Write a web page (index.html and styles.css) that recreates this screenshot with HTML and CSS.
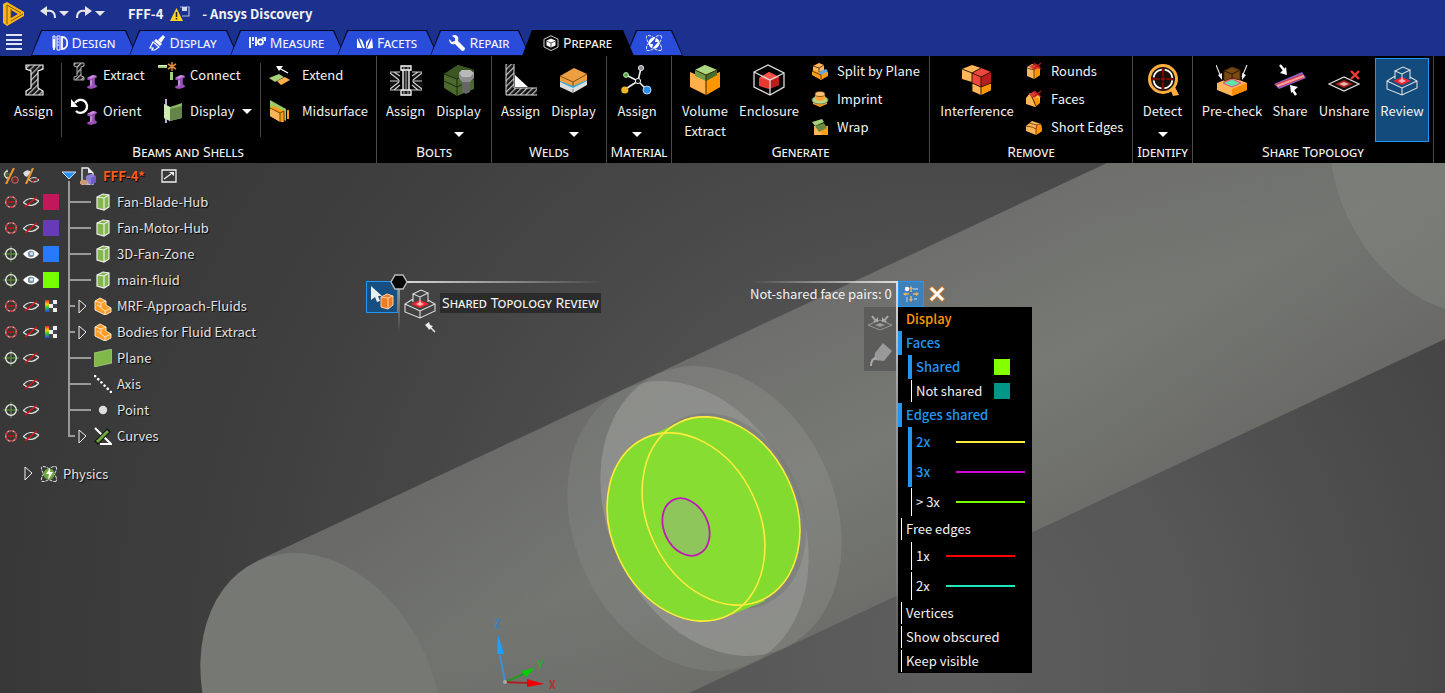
FILE: index.html
```html
<!DOCTYPE html>
<html lang="en">
<head>
<meta charset="utf-8">
<title>FFF-4 - Ansys Discovery</title>
<link rel="stylesheet" href="styles.css">
</head>
<body>
<svg class="defs" aria-hidden="true">
  <defs>
    <pattern id="hatch" width="4" height="4" patternUnits="userSpaceOnUse" patternTransform="rotate(-45)"><rect width="4" height="4" fill="#111"/><rect width="4" height="1.3" fill="#bbb"/></pattern>
    <linearGradient id="rainbow" x1="0" y1="0" x2="0" y2="1"><stop offset="0" stop-color="#e22"/><stop offset=".35" stop-color="#fc0"/><stop offset=".6" stop-color="#3c3"/><stop offset="1" stop-color="#24e"/></linearGradient>
  </defs>
  <symbol id="purple-beam" viewBox="0 0 12 16"><path d="M1 4 7 1l4 1v2L9 5v6l2 1v2l-6 2-4-1v-2l3-1V7L1 6z" fill="#9a4fb5"/><path d="M1 4 7 1l4 1-6 3zM4 7l2-1v6l-2 1z" fill="#c98bdd"/></symbol>
  <symbol id="i-beam" viewBox="0 0 32 32"><path d="M8 1h17v4l-5 2v17l5 3v4H8v-4l5-3V7L8 5z" fill="url(#hatch)" stroke="#eee" stroke-width="1.2"/></symbol>
  <symbol id="i-extract" viewBox="0 0 28 28"><path d="M3 2h10v3l-3 1v9l3 1v3H3v-3l3-1V6L3 5z" fill="url(#hatch)" stroke="#aaa"/><use href="#purple-beam" x="15" y="13" width="12" height="15"/></symbol>
  <symbol id="i-orient" viewBox="0 0 28 28"><path d="M4 6a6.500 6.500 0 1 1 1 8" fill="none" stroke="#fff" stroke-width="2.400"/><path d="M0 2v8h7z" fill="#fff"/><use href="#purple-beam" x="15" y="13" width="12" height="15"/></symbol>
  <symbol id="i-connect" viewBox="0 0 28 28"><path d="M0 4h9v3H0z" fill="#a5cf78"/><path d="M0 4h9v1H0z" fill="#e3f3cf"/><path d="M12 11h3v8h-3z" fill="#a5cf78"/><path d="M14 1v9M10 3l8 5M18 3l-8 5" stroke="#e08a3c" stroke-width="1.5"/><use href="#purple-beam" x="16" y="13" width="12" height="15"/></symbol>
  <symbol id="i-bdisplay" viewBox="0 0 28 28"><path d="M8 2v24" stroke="#c9a4dc" stroke-width="2"/><path d="M6 7l6 3 12-4v15l-12 3-6-3z" fill="#8cb86a"/><path d="M6 7l6 3v14l-6-3z" fill="#cdeab0"/><path d="M12 12l12-3v12l-12 3z" fill="#64854a"/></symbol>
  <symbol id="i-extend" viewBox="0 0 24 24"><path d="M1 15l10-4 5 3-9 5z" fill="#a5cf78"/><path d="M9 18l8-4 5 3-9 5z" fill="#ffb04a"/><path d="M20 10 11 5" stroke="#fff" stroke-width="1.4"/><path d="M8 3h7l-4 5z" fill="#fff"/></symbol>
  <symbol id="i-mid" viewBox="0 0 24 24"><path d="M2 1l16 9v12L2 12z" fill="#9ccb6a"/><path d="M2 9l4-2 10 5v11h-3L2 17z" fill="#ff9c1a"/><path d="M2 9l10 5v9L2 17z" fill="#ffb65a"/><path d="M2 9l10 5v9M12 14l4-2v10" fill="none" stroke="#7a4300"/><path d="M19 11h2v9h-2z" fill="#ff9c1a"/></symbol>
  <symbol id="i-bolt" viewBox="0 0 32 32"><path d="M0 8h9v18H0zM23 8h9v18h-9z" fill="#111"/><path d="M0 8h10M0 17h10M0 26h10M22 8h10M22 17h10M22 26h10M0 9l9 7M4 8l6 4M32 9l-9 7M28 8l-6 4M0 25l9-7M4 26l6-5M32 25l-9-7M28 26l-6-5" stroke="#ccc" stroke-width="1.2"/><path d="M11 2h10v4H11zM13 6h6v20h-6zM11 26h10v5H11z" fill="#222" stroke="#fff" stroke-width="1.3"/><path d="M14 2v4M18 2v4M14 26v5M18 26v5M16 7v18" stroke="#ccc" stroke-width=".8"/></symbol>
  <symbol id="i-boltd" viewBox="0 0 32 32"><path d="M1 10 15 1l16 5v19l-17 7L1 24z" fill="#4b6a2d"/><path d="M1 10 15 1l16 5-17 9z" fill="#3d5724"/><path d="M1 10l13 5v17M14 15l17-9M1 17l13 6 17-8" fill="none" stroke="#1b290e"/><path d="M19 16h8v12l-4 2-4-2z" fill="#666"/><path d="M16 9l3-3h8l4 3v5l-4 4h-8l-3-4z" fill="#8d8d8d"/><path d="M16 9l3-3h8l4 3-4 4h-8z" fill="#b9b9b9"/></symbol>
  <symbol id="i-weld" viewBox="0 0 32 32"><path d="M1 0h8v24h23v7H1z" fill="url(#hatch)"/><path d="M1 0v31h31M9 0v24h23" fill="none" stroke="#ddd"/><path d="M10 11v12h13z" fill="#fff"/></symbol>
  <symbol id="i-weldd" viewBox="0 0 32 32"><path d="M2 15l13-7 14 4v9l-14 8-13-6z" fill="#ddd"/><path d="M2 13v5l13 6 14-7v-5z" fill="#35a9d8"/><path d="M2 12 16 4l13 6v6l-14 6-13-5z" fill="#ee9f42"/><path d="M2 12l13 6 14-8M15 18v4" fill="none" stroke="#7b4c13"/><path d="M15 25v4" stroke="#777"/></symbol>
  <symbol id="i-mat" viewBox="0 0 32 32"><path d="M17 17 20 4M17 17 5 11M17 17 3 26M17 17l9 9" stroke="#eee" stroke-width="1.6"/><circle cx="20" cy="4" r="2.600" fill="#8a8f99" stroke="#ddd"/><circle cx="5" cy="11" r="2.400" fill="#4fa63c" stroke="#cfe8c7"/><circle cx="3.800" cy="26" r="3.600" fill="#f3b52d"/><circle cx="26" cy="26" r="4" fill="#2f8be6" stroke="#b5d9ff"/><circle cx="17" cy="17" r="2.600" fill="#111" stroke="#eee"/></symbol>
  <symbol id="i-vol" viewBox="0 0 32 32"><path d="M1 8l16 7 14-7v15l-14 8L1 23z" fill="#ffb04a"/><path d="M17 15l14-7v15l-14 8z" fill="#ff9500"/><path d="M6 6 16 1l12 5v5l-11 6L6 12z" fill="#6d9e45"/><path d="M6 6 16 1l12 5-11 5z" fill="#add681"/><path d="M17 11l11-5v5l-11 6z" fill="#466b2a"/><path d="M17 17v14M6 6l11 5 11-5M17 11v6" stroke="#3a2400" fill="none"/></symbol>
  <symbol id="i-encl" viewBox="0 0 32 32"><path d="M6 14l10-6 10 5v8l-10 4-10-3z" fill="#e5382f"/><path d="M16 17l10-4v8l-10 4z" fill="#b71f1c"/><path d="M6 14l10-6 10 5-10 4z" fill="#f4504a"/><path d="M1 8 15 1l16 8v14L17 31 1 23zM1 8l16 8 14-7M17 16v15" fill="none" stroke="#ddd" stroke-width="1.300"/></symbol>
  <symbol id="i-split" viewBox="0 0 18 18"><path d="M1 9l5-3 11 4v4l-7 4-9-5z" fill="#ff9c1a"/><path d="M2 4l6-3 5 2v5l-6 2-5-2z" fill="#ffb65a"/><path d="M8 10l7-3 2 2-7 4z" fill="#58a8ee"/><path d="M2 4l6 2 5-3M8 6v4M1 9l9 4M10 13v4" fill="none" stroke="#3c2500" stroke-width=".8"/></symbol>
  <symbol id="i-imprint" viewBox="0 0 18 18"><path d="M2 9h14v5l-7 3-7-3z" fill="#ff9c1a"/><ellipse cx="9" cy="10" rx="8" ry="4" fill="#b8d98f" stroke="#67844c"/><path d="M4 4v5c2 3 8 3 10 0V4z" fill="#ffa63a"/><ellipse cx="9" cy="4" rx="5" ry="2.500" fill="#ffc27a" stroke="#5c3700" stroke-width=".7"/></symbol>
  <symbol id="i-wrap" viewBox="0 0 18 18"><path d="M3 8h14v9H3z" fill="#ff9c1a"/><path d="M3 8l7 4v5H3z" fill="#ffb65a"/><path d="M1 4l10-3 2 3-9 4z" fill="#a6d274"/><path d="M4 8l9-3 3 5-8 4z" fill="#6a8a3e"/></symbol>
  <symbol id="i-interf" viewBox="0 0 32 32"><path d="M1 5l10-4 9 3-9 5v9L1 15z" fill="#ffb65a"/><path d="M11 20h19v6l-10 5-9-4z" fill="#ffb65a"/><path d="M20 20h10v6l-10 5z" fill="#ff9500"/><path d="M11 9l9-5 10 4v11l-10 4-9-4z" fill="#ee453c"/><path d="M20 13l10-5v11l-10 4z" fill="#b71f1c"/><path d="M1 5l10 4 9-5M11 9l9 4 10-5M20 13v18M11 9v18M11 19l9 4 10-4" fill="none" stroke="#331a00"/></symbol>
  <symbol id="i-rounds" viewBox="0 0 18 18"><path d="M2 5l5-3 8 3v8l-6 4-7-3z" fill="#ffb65a"/><path d="M9 8l6-3v8l-6 4z" fill="#ff9500"/><path d="M4 4l8-2 3 4-6 2z" fill="#d83a32"/><path d="M2 6l7 2v9" fill="none" stroke="#4b2c00" stroke-width=".8"/><path d="M9 1l7 6M16 1l-7 6" stroke="#c01818" stroke-width="1.3"/></symbol>
  <symbol id="i-faces" viewBox="0 0 18 18"><path d="M1 8l4-5 10 2v7l-5 5-9-3z" fill="#ffb65a"/><path d="M7 7l7 1 1 5-5 4z" fill="#ff9500"/><path d="M4 4l6-3 3 4-6 3z" fill="#d83a32"/><path d="M7 7l4 9" stroke="#4b2c00"/><path d="M9 1l7 6M16 1l-7 6" stroke="#c01818" stroke-width="1.3"/></symbol>
  <symbol id="i-short" viewBox="0 0 18 18"><path d="M1 8l6-5 9 3 1 7-6 4-10-4z" fill="#ffb65a"/><path d="M11 10l5-4 1 7-6 4z" fill="#ff9500"/><path d="M1 8l6 1 4 2v6M4 5l8 2-1 4M12 7l4-1" fill="none" stroke="#5b3600" stroke-width=".8"/><path d="M12 7l-1 4" stroke="#d22"/></symbol>
  <symbol id="i-detect" viewBox="0 0 32 32"><circle cx="16" cy="15" r="13.500" fill="#15100c" stroke="#ffae3d" stroke-width="3"/><path d="M24 27l4-4 4 8-6 1z" fill="#ffae3d"/><circle cx="16" cy="15" r="9.500" fill="none" stroke="#fff" stroke-width="1.800" stroke-dasharray="11.900 3" stroke-dashoffset="-1.500"/><path d="M5 15h8M19 15h8M16 4v8M16 18v8M14 15h4M16 13v4" stroke="#c00" stroke-width="1.2"/></symbol>
  <symbol id="i-pre" viewBox="0 0 32 32"><path d="M1 19l15-6 15 6v7l-15 6-15-6z" fill="#ffb65a"/><path d="M16 25l15-6v7l-15 6z" fill="#ff8c00"/><path d="M7 19l9-4 9 4-9 4z" fill="#5fe3a8" stroke="#e9418d"/><path d="M8 7l8-4 8 3v10l-8-2-8 3z" fill="#7a4a12" stroke="#4b2b05"/><path d="M8 7l8 3 8-4M16 10v5" fill="none" stroke="#2c1903"/><path d="M0 1l5 12M31 1l-5 12" stroke="#ddd" stroke-width="1.2"/><path d="M2 11l4 5V9zM30 11l-4 5V9z" fill="#eee"/></symbol>
  <symbol id="i-share" viewBox="0 0 32 32"><path d="M0 20 28 8l4 6L5 25z" fill="#8c62c9"/><path d="M2 20 29 10l1 4L5 23z" fill="#e53935"/><path d="M3 22 30 12" stroke="#f6a0a0" stroke-width="2"/><path d="M6 1l4 5M22 31l-4-6" stroke="#fff" stroke-width="2.400"/><path d="M13 11 6 9l6-6zM16 21l8 2-7 6z" fill="#fff"/></symbol>
  <symbol id="i-unshare" viewBox="0 0 32 32"><path d="M1 20l15-7 15 7-15 7z" fill="#140808" stroke="#ddd" stroke-width="1.2"/><path d="M7 20l9-4 9 4-9 4z" fill="#9d2420"/><path d="M11 20l5-2 5 2-5 2z" fill="#f3b3ae"/><path d="M23 7l8 8M31 7l-8 8" stroke="#f23c32" stroke-width="2.400"/></symbol>
  <symbol id="i-review" viewBox="0 0 32 32"><path d="M7 17l9-4 9 4-9 4z" fill="#ee2430"/><path d="M12 17l4-2 4 2-4 2z" fill="#ffb0b0"/><path d="M9 7l8-4 7 3-8 4zM9 7v8M16 10v6M24 6v9M9 12 1 17v8l15 6 15-7v-7l-7-4M1 17l15 7 15-7M16 24v7" fill="none" stroke="#ddd" stroke-width="1.1"/></symbol>

  <symbol id="t-design" viewBox="0 0 16 16"><path d="M1 1h2v11l-1 3-1-3zM5 1h3v14H5z" fill="none" stroke="#fff"/><path d="M1 4h2v8l-1 3-1-3z" fill="#fff"/><path d="M5 4h2M5 7h2M5 10h2" stroke="#fff"/><path d="M10 2c7 0 7 12 0 12z" fill="none" stroke="#fff" stroke-width="1.8"/></symbol>
  <symbol id="t-display" viewBox="0 0 16 16"><path d="M14 0l2 2-4 6-3-3z" fill="#fff"/><path d="M7 4l6 5-2 2-6-5z" fill="#fff"/><path d="M4 7l6 5-4 3H3l1-2H1z" fill="none" stroke="#fff" stroke-width="1.2"/></symbol>
  <symbol id="t-measure" viewBox="0 0 18 16"><path d="M1 2v11M4 2v4M4 8v1M7 2v9M16 2v4" stroke="#fff" stroke-width="1.800"/><circle cx="11.500" cy="7" r="2.500" fill="none" stroke="#fff" stroke-width="1.800"/><path d="M13 3h2" stroke="#fff" stroke-width="1.400"/></symbol>
  <symbol id="t-facets" viewBox="0 0 16 16"><path d="M0 3v10h5zM2 3l3 2 3 8H6zM9 14V7l4-4zM15 3l1 10-6 1z" fill="#fff"/></symbol>
  <symbol id="t-repair" viewBox="0 0 16 16"><path d="M5 0c4 0 5 3 4 6l7 7c0 2-1 3-3 3L6 9C3 10 0 8 0 4l3 3 3-1V3L3 1z" fill="#fff"/></symbol>
  <symbol id="t-prepare" viewBox="0 0 16 16"><path d="M8 .7l7 3.500v8L8 15.500 1 12V4.200z" fill="none" stroke="#ccc" stroke-width="1"/><path d="M8 3.500l4.500 2v5L8 12.500l-4.500-2v-5z" fill="#fff"/><path d="M3.500 6 8 8l4.500-2M8 8v4" stroke="#333" stroke-width=".8" fill="none"/></symbol>
  <symbol id="atom" viewBox="0 0 18 18"><ellipse cx="9" cy="9" rx="10" ry="4" transform="rotate(45 9 9)" fill="none" stroke="#ddd" stroke-dasharray="3 1"/><ellipse cx="9" cy="9" rx="10" ry="4" transform="rotate(-45 9 9)" fill="none" stroke="#ddd" stroke-dasharray="3 1"/><circle cx="9" cy="9" r="5.500" fill="currentColor"/></symbol>

  <symbol id="s-off" viewBox="0 0 16 16"><circle cx="8" cy="8" r="5.300" fill="none" stroke="#d9c4c4" stroke-width="1.300"/><circle cx="8" cy="8" r="5.300" fill="none" stroke="#c22" stroke-width="1.300" stroke-dasharray="4 1.550"/><path d="M5 8h6" stroke="#c11" stroke-width="1.6"/></symbol>
  <symbol id="s-on" viewBox="0 0 16 16"><path d="M0 8h16M8 0v16" stroke="#55803a" stroke-width="1.6"/><circle cx="8" cy="8" r="5.300" fill="none" stroke="#eee" stroke-width="1.300"/></symbol>
  <symbol id="e-off" viewBox="0 0 16 16"><path d="M0 9c4-5 10-6 16-2-4 5-10 6-15 2" fill="none" stroke="#ddd" stroke-width="1.3"/><path d="M2 13 14 3" stroke="#d11" stroke-width="1.6"/></symbol>
  <symbol id="e-on" viewBox="0 0 16 16"><path d="M0 8c5-6 11-6 16 0-5 6-11 6-16 0z" fill="#fff"/><circle cx="8" cy="8" r="3.200" fill="#7d93a5"/><circle cx="8.500" cy="7.500" r="1.600" fill="#d4ecfa"/></symbol>
  <symbol id="c-multi" viewBox="0 0 16 16"><path d="M2 2h4v12H2z" fill="url(#rainbow)"/><path d="M10 2h4v4h-4zM6 6h4v4H6zM10 10h4v4h-4z" fill="#eee"/><path d="M6 2h4v4H6zM10 6h4v4h-4zM6 10h4v4H6z" fill="#444"/></symbol>
  <symbol id="n-body" viewBox="0 0 16 18"><path d="M2 4l6-3 6 1v12l-5 3-7-2z" fill="#82b74a" stroke="#eee" stroke-width="1.2"/><path d="M2 4l7 1 5-3M9 5v12" stroke="#eee" stroke-width="1.2" fill="none"/></symbol>
  <symbol id="n-comp" viewBox="0 0 18 18"><path d="M1 4l5-3 6 3v4l5 3v4l-6 3-10-5z" fill="#ff9c26" stroke="#f6e3c8"/><path d="M1 4l6 2 5-2M7 6v5l4 3 6-3M11 14v4M3 8l4 2" stroke="#f6e3c8" fill="none"/></symbol>
  <symbol id="n-plane" viewBox="0 0 18 18"><path d="M0 4l18-4v14L0 18z" fill="#82b74a" stroke="#a6c986" stroke-width=".8"/></symbol>
  <symbol id="n-axis" viewBox="0 0 18 18"><path d="M1 1l16 16" stroke="#fff" stroke-width="2.600" stroke-linecap="round" stroke-dasharray=".1 4.400"/></symbol>
  <symbol id="n-point" viewBox="0 0 18 18"><circle cx="9" cy="9" r="4.200" fill="#ddd"/></symbol>
  <symbol id="n-curves" viewBox="0 0 18 18"><path d="M1 1l16 16H6" fill="none" stroke="#fff" stroke-width="2"/><path d="M2 16 15 3" stroke="#111" stroke-width="5"/><path d="M3 15 14 4" stroke="#6fa83c" stroke-width="3"/></symbol>
</svg>

<header class="titlebar">
  <svg class="logo" viewBox="0 0 24 26"><path d="M1 3l4-2 17 10v4L5 25l-4-3z" fill="#fdb515"/><path d="M9 9l7 4-7 4z" fill="#1c318d"/><path d="M5 4v19M9 17V8M5 4l14 8M9 20l12-7" fill="none" stroke="#7b5614" stroke-width="1"/></svg>
  <button class="quick undo" aria-label="Undo"><svg viewBox="0 0 30 16" width="30" height="16"><path d="M6 5c6-1 9 1 9 7" fill="none" stroke="#e6e6e6" stroke-width="2"/><path d="M0 5l7-5v10z" fill="#e6e6e6"/><path d="M19 5h10l-5 5z" fill="#e6e6e6"/></svg></button>
  <button class="quick redo" aria-label="Redo"><svg viewBox="0 0 30 16" width="30" height="16"><path d="M10 5C4 4 1 6 1 12" fill="none" stroke="#e6e6e6" stroke-width="2"/><path d="M16 5 9 0v10z" fill="#e6e6e6"/><path d="M19 5h10l-5 5z" fill="#e6e6e6"/></svg></button>
  <strong class="doc">FFF-4</strong>
  <svg class="warn" viewBox="0 0 20 16"><path d="M10 1h9v9h-7" fill="none" stroke="#a9b3d9" stroke-width="1.200"/><path d="M12 1h5v4h-5z" fill="#cfd5ec"/><path d="M6.500 2 13 15H0z" fill="#ffd21c"/><path d="M6.500 6v5M6.500 12v1.500" stroke="#222" stroke-width="1.5"/></svg>
  <strong>- Ansys Discovery</strong>
</header>

<nav class="tabs">
  <button class="menu" aria-label="Menu"><svg viewBox="0 0 16 16" width="16" height="16"><path d="M0 1h16M0 6h16M0 10h16M0 15h16" stroke="#dfe3f5" stroke-width="2"/></svg></button>
  <button class="tab w-design"><svg><use href="#t-design"/></svg><span>Design</span></button>
  <button class="tab w-display"><svg><use href="#t-display"/></svg><span>Display</span></button>
  <button class="tab w-measure"><svg><use href="#t-measure"/></svg><span>Measure</span></button>
  <button class="tab w-facets"><svg><use href="#t-facets"/></svg><span>Facets</span></button>
  <button class="tab w-repair"><svg><use href="#t-repair"/></svg><span>Repair</span></button>
  <button class="tab w-prepare active"><svg><use href="#t-prepare"/></svg><span>Prepare</span></button>
  <button class="tab w-physics" aria-label="Physics"><svg class="white"><use href="#atom"/><path d="M11 3 5 10h3l-1 5 6-7h-3z" fill="#2a4cdb"/></svg></button>
</nav>

<section class="ribbon">
  <div class="group">
    <div class="tools">
      <button class="big b-first"><svg><use href="#i-beam"/></svg>Assign</button>
      <div class="small two ruled">
        <button><svg><use href="#i-extract"/></svg>Extract</button>
        <button><svg><use href="#i-connect"/></svg>Connect</button>
        <button><svg><use href="#i-orient"/></svg>Orient</button>
        <button><svg><use href="#i-bdisplay"/></svg>Display<i class="caret"></i></button>
      </div>
      <div class="small one ruled">
        <button><svg><use href="#i-extend"/></svg>Extend</button>
        <button><svg><use href="#i-mid"/></svg>Midsurface</button>
      </div>
    </div>
    <h2>Beams and Shells</h2>
  </div>
  <div class="group">
    <div class="tools center">
      <button class="big"><svg><use href="#i-bolt"/></svg>Assign</button>
      <button class="big"><svg><use href="#i-boltd"/></svg>Display<i class="caret"></i></button>
    </div>
    <h2>Bolts</h2>
  </div>
  <div class="group">
    <div class="tools center">
      <button class="big"><svg><use href="#i-weld"/></svg>Assign</button>
      <button class="big"><svg><use href="#i-weldd"/></svg>Display<i class="caret"></i></button>
    </div>
    <h2>Welds</h2>
  </div>
  <div class="group">
    <div class="tools center">
      <button class="big"><svg><use href="#i-mat"/></svg>Assign<i class="caret"></i></button>
    </div>
    <h2>Material</h2>
  </div>
  <div class="group">
    <div class="tools pad">
      <button class="big w58"><svg><use href="#i-vol"/></svg>Volume<br>Extract</button>
      <button class="big w70"><svg><use href="#i-encl"/></svg>Enclosure</button>
      <div class="small three">
        <button><svg><use href="#i-split"/></svg>Split by Plane</button>
        <button><svg><use href="#i-imprint"/></svg>Imprint</button>
        <button><svg><use href="#i-wrap"/></svg>Wrap</button>
      </div>
    </div>
    <h2>Generate</h2>
  </div>
  <div class="group">
    <div class="tools pad">
      <button class="big w86"><svg><use href="#i-interf"/></svg>Interference</button>
      <div class="small three">
        <button><svg><use href="#i-rounds"/></svg>Rounds</button>
        <button><svg><use href="#i-faces"/></svg>Faces</button>
        <button><svg><use href="#i-short"/></svg>Short Edges</button>
      </div>
    </div>
    <h2>Remove</h2>
  </div>
  <div class="group">
    <div class="tools middle">
      <button class="big"><svg><use href="#i-detect"/></svg>Detect<i class="caret"></i></button>
    </div>
    <h2>Identify</h2>
  </div>
  <div class="group">
    <div class="tools pad">
      <button class="big w70"><svg><use href="#i-pre"/></svg>Pre-check</button>
      <button class="big w46"><svg><use href="#i-share"/></svg>Share</button>
      <button class="big w62"><svg><use href="#i-unshare"/></svg>Unshare</button>
      <button class="big w54 selected"><svg><use href="#i-review"/></svg>Review</button>
    </div>
    <h2>Share Topology</h2>
  </div>
</section>

<main class="view">
  <svg class="scene" viewBox="0 163 1445 530" preserveAspectRatio="xMinYMin slice" role="img" aria-label="Model view">
    <defs>
      <radialGradient id="bg" cx="950" cy="650" r="950" gradientUnits="userSpaceOnUse"><stop offset="0" stop-color="#5e5e5e"/><stop offset=".25" stop-color="#575757"/><stop offset=".5" stop-color="#4a4a4a"/><stop offset=".75" stop-color="#3f3f3f"/><stop offset="1" stop-color="#383838"/></radialGradient>
      <linearGradient id="tube" x1="660" y1="370" x2="800" y2="660" gradientUnits="userSpaceOnUse"><stop offset="0" stop-color="#6e6f6c"/><stop offset=".5" stop-color="#777974"/><stop offset="1" stop-color="#6c6d69"/></linearGradient>
      <linearGradient id="shade" x1="250" y1="0" x2="1445" y2="0" gradientUnits="userSpaceOnUse"><stop offset="0" stop-color="#555" stop-opacity=".25"/><stop offset=".4" stop-color="#555" stop-opacity="0"/><stop offset=".7" stop-color="#555" stop-opacity="0"/><stop offset="1" stop-color="#555" stop-opacity=".15"/></linearGradient>
      <clipPath id="front-ring"><ellipse cx="688" cy="526" rx="151" ry="113" transform="rotate(65 688 526)"/></clipPath>
    </defs>
    <rect y="163" width="1445" height="530" fill="url(#bg)"/>
    <path d="M257 561 1107 163H1445V339L689 693 321 700Z" fill="url(#tube)"/>
    <path d="M257 561 1107 163H1445V339L689 693 321 700Z" fill="url(#shade)"/>
    <ellipse cx="321" cy="698" rx="151" ry="113" transform="rotate(65 321 698)" fill="#767873"/>
    <ellipse cx="1450" cy="169" rx="151" ry="113" transform="rotate(65 1450 169)" fill="#8c8e89" fill-opacity=".35"/>
    <ellipse cx="688" cy="526" rx="151" ry="113" transform="rotate(65 688 526)" fill="#a4a69f" fill-opacity=".16"/>
    <ellipse cx="721" cy="511" rx="151" ry="113" transform="rotate(65 721 511)" fill="#a8aaa4" fill-opacity=".22"/>
    <g clip-path="url(#front-ring)"><ellipse cx="721" cy="511" rx="151" ry="113" transform="rotate(65 721 511)" fill="#b0b2ac" fill-opacity=".26"/></g>
    <ellipse cx="724" cy="511" rx="102" ry="77" transform="rotate(65 724 511)" fill="#777974" fill-opacity=".6"/>
    <g fill="#80d92d">
      <ellipse cx="686" cy="527" rx="98" ry="74" transform="rotate(65 686 527)"/>
      <path d="M642 440 675 424 765 601 731 615Z"/>
    </g>
    <ellipse cx="721" cy="511" rx="98" ry="74" transform="rotate(65 721 511)" fill="#84db30"/>
    <ellipse cx="686" cy="527" rx="98" ry="74" transform="rotate(65 686 527)" fill="#8ae034" fill-opacity=".5"/>
    <g fill="none" stroke="#ffeb3b" stroke-width="1.6">
      <ellipse cx="721" cy="511" rx="98" ry="74" transform="rotate(65 721 511)"/>
      <ellipse cx="686" cy="527" rx="98" ry="74" transform="rotate(65 686 527)"/>
    </g>
    <ellipse cx="686" cy="527" rx="30" ry="22" transform="rotate(65 686 527)" fill="#8fc65c" stroke="#c218b8" stroke-width="1.8"/>
    <g stroke-width="2">
      <path d="M505 682 500 655" stroke="#3d8fd6"/><path d="M498 635 504 654H497Z" fill="#1ea0ff"/>
      <path d="M505 682 524 674" stroke="#1e9a1e"/><path d="M535 668 526 677 521 671Z" fill="#0c0"/>
      <path d="M505 682 528 683" stroke="#a22"/><path d="M544 684 527 687V679Z" fill="#e00"/>
      <circle cx="505" cy="682" r="2" fill="#aaa"/>
    </g>
    <g class="axis-label"><text x="494" y="628" fill="#3a7fc4">Z</text><text x="537" y="669" fill="#2ea82e">Y</text><text x="549" y="689" fill="#b92b2b">X</text></g>
  </svg>

  <section class="tree" aria-label="Model tree">
    <div class="row root"><svg class="c"><path d="M0 6h9M4 1v11" stroke="#55803a"/><path d="M5 3a3 3 0 1 0 0 7" fill="none" stroke="#ddd" stroke-width="1.300"/><circle cx="12" cy="12" r="3.300" fill="none" stroke="#d66"/><path d="M10 12h4" stroke="#c11"/><path d="M3 16 11 0" stroke="#f0962e" stroke-width="2"/></svg><svg class="c"><path d="M0 5q4-5 8-1L4 9Q1 8 0 5" fill="#ddd"/><path d="M6 12q5-5 10 0-5 4-10 0" fill="none" stroke="#ddd"/><path d="M8 15l7-5" stroke="#d11"/><path d="M3 16 10 0" stroke="#f0962e" stroke-width="2"/></svg><i class="c"></i><svg class="link"><path d="M8 18V26"/><path class="open" d="M1 9h14l-7 7z"/></svg><svg class="rooticon" viewBox="0 0 18 18"><path d="M3 1h6l5 5v11H3z" fill="#444" stroke="#eee" stroke-width="1.3"/><path d="M9 1v5h5" fill="#eee"/><path d="M7 9l5-2 5 2v6l-5 3-5-3z" fill="#8d7bd8"/><path d="M12 11l5-2v6l-5 3z" fill="#6f5cc4"/><path d="M1 14q5-3 9 1l-3 3-6-1z" fill="#c99a76"/></svg><strong>FFF-4*</strong><svg class="pop" viewBox="0 0 16 14"><path d="M1 1h14v12H1zM3 10l7-5" fill="none" stroke="#eee" stroke-width="1.3"/><path d="M13 3v4L8 3z" fill="#eee"/></svg></div>
    <div class="row"><svg class="c"><use href="#s-off"/></svg><svg class="c"><use href="#e-off"/></svg><i class="c crimson"></i><svg class="link"><path d="M8 0V26M8 13H30"/></svg><svg class="n"><use href="#n-body"/></svg><span>Fan-Blade-Hub</span></div>
    <div class="row"><svg class="c"><use href="#s-off"/></svg><svg class="c"><use href="#e-off"/></svg><i class="c violet"></i><svg class="link"><path d="M8 0V26M8 13H30"/></svg><svg class="n"><use href="#n-body"/></svg><span>Fan-Motor-Hub</span></div>
    <div class="row"><svg class="c"><use href="#s-on"/></svg><svg class="c"><use href="#e-on"/></svg><i class="c azure"></i><svg class="link"><path d="M8 0V26M8 13H30"/></svg><svg class="n"><use href="#n-body"/></svg><span>3D-Fan-Zone</span></div>
    <div class="row"><svg class="c"><use href="#s-on"/></svg><svg class="c"><use href="#e-on"/></svg><i class="c lime"></i><svg class="link"><path d="M8 0V26M8 13H30"/></svg><svg class="n"><use href="#n-body"/></svg><span>main-fluid</span></div>
    <div class="row"><svg class="c"><use href="#s-off"/></svg><svg class="c"><use href="#e-off"/></svg><svg class="c"><use href="#c-multi"/></svg><svg class="link"><path d="M8 0V26M8 13H14"/><path class="tri" d="M18 7v13l7-7z"/></svg><svg class="n"><use href="#n-comp"/></svg><span>MRF-Approach-Fluids</span></div>
    <div class="row"><svg class="c"><use href="#s-off"/></svg><svg class="c"><use href="#e-off"/></svg><svg class="c"><use href="#c-multi"/></svg><svg class="link"><path d="M8 0V26M8 13H14"/><path class="tri" d="M18 7v13l7-7z"/></svg><svg class="n"><use href="#n-comp"/></svg><span>Bodies for Fluid Extract</span></div>
    <div class="row"><svg class="c"><use href="#s-on"/></svg><svg class="c"><use href="#e-off"/></svg><i class="c"></i><svg class="link"><path d="M8 0V26M8 13H30"/></svg><svg class="n"><use href="#n-plane"/></svg><span>Plane</span></div>
    <div class="row"><i class="c"></i><svg class="c"><use href="#e-off"/></svg><i class="c"></i><svg class="link"><path d="M8 0V26M8 13H30"/></svg><svg class="n"><use href="#n-axis"/></svg><span>Axis</span></div>
    <div class="row"><svg class="c"><use href="#s-on"/></svg><svg class="c"><use href="#e-off"/></svg><i class="c"></i><svg class="link"><path d="M8 0V26M8 13H30"/></svg><svg class="n"><use href="#n-point"/></svg><span>Point</span></div>
    <div class="row"><svg class="c"><use href="#s-off"/></svg><svg class="c"><use href="#e-off"/></svg><i class="c"></i><svg class="link"><path d="M8 0V13H14"/><path class="tri" d="M18 7v13l7-7z"/></svg><svg class="n"><use href="#n-curves"/></svg><span>Curves</span></div>
    <div class="row physics"><svg class="tri-only"><path class="tri" d="M1 1v13l7-7z"/></svg><svg class="n leaf"><use href="#atom"/><path d="M10 3 6 9h3l-1 6 5-8h-3z" fill="#fff"/></svg><span>Physics</span></div>
  </section>

  <section class="guide">
    <i class="guide-h"></i><i class="guide-v"></i>
    <button class="pick" aria-label="Select bodies"><svg viewBox="0 0 30 30"><path d="M4 4v14l4-3 2 5 3-1-2-5h4z" fill="#eee"/><path d="M14 15l6-3 6 2v9l-5 4-7-2z" fill="#f47a20"/><path d="M14 15l7 1 5-2M21 16v11M14 15l6-3 6 2v9l-5 4-7-2z" fill="none" stroke="#f8d3b3"/></svg></button>
    <svg class="hex" viewBox="0 0 18 16"><path d="M5 1h8l4 7-4 7H5L1 8z" fill="#080808" stroke="#bbb" stroke-width="1.4"/></svg>
    <svg class="tool"><use href="#i-review"/></svg>
    <h1>Shared Topology Review</h1>
    <svg class="pin" viewBox="0 0 12 12"><path d="M1 4l4-3 1 3 3 1-4 4-1-2z" fill="#eee"/><path d="M6 6l5 5" stroke="#eee" stroke-width="1.4"/></svg>
  </section>

  <section class="review">
    <p class="pairs">Not-shared face pairs: 0</p>
    <div class="side">
      <svg viewBox="0 0 32 32"><path d="M4 18l12-5 12 5-12 5z" fill="none" stroke="#999"/><path d="M11 18l5-2 5 2-5 2z" fill="#999"/><path d="M8 9l4 5M24 9l-4 5" stroke="#aaa" stroke-width="2"/><path d="M9 15h5v-5zM23 15h-5v-5z" fill="#aaa"/></svg>
      <svg viewBox="0 0 32 32"><path d="M19 4l9 8-8 10-10-1 1-7z" fill="#999"/><path d="M13 19q-6 0-6 8" fill="none" stroke="#aaa" stroke-width="2"/></svg>
    </div>
    <button class="opts" aria-label="Display options"><svg viewBox="0 0 24 24"><path d="M12 5v14M5 12h14" stroke="#f0b05a" stroke-width="1.5" stroke-dasharray="5 4"/><path d="M12 4l-2 3h4zM12 20l-2-3h4zM4 12l3-2v4zM20 12l-3-2v4z" fill="#f0b05a"/><circle cx="8" cy="7" r="2.200" fill="#fff"/><path d="M14 7h5M8 15v5M15 17h3" stroke="#9cc4e6" stroke-width="1.300"/></svg></button>
    <button class="close" aria-label="Close"><svg viewBox="0 0 16 16"><path d="M3 3l10 10M13 3 3 13" stroke="#c9772b" stroke-width="5" stroke-linecap="square"/><path d="M3 3l10 10M13 3 3 13" stroke="#fff" stroke-width="3" stroke-linecap="square"/></svg></button>
    <div class="panel">
      <h2>Display</h2>
      <button class="on">Faces</button>
      <button class="sub on">Shared<i class="chip shared"></i></button>
      <button class="sub">Not shared<i class="chip teal"></i></button>
      <button class="on">Edges shared</button>
      <button class="sub tall on">2x<i class="line yellow"></i></button>
      <button class="sub tall on">3x<i class="line magenta"></i></button>
      <button class="sub tall">&gt; 3x<i class="line lime"></i></button>
      <button>Free edges</button>
      <button class="sub tall">1x<i class="line free red"></i></button>
      <button class="sub tall">2x<i class="line free mint"></i></button>
      <button>Vertices</button>
      <button>Show obscured</button>
      <button>Keep visible</button>
    </div>
  </section>
</main>
</body>
</html>
```
FILE: styles.css
```css
* { box-sizing: border-box; }
html, body { height: 100%; }
body {
  margin: 0;
  display: flex;
  flex-direction: column;
  background: #3c3c3c;
  color: #f2f2f2;
  font: 13px/20px "Noto Sans CJK SC", "Noto Sans", sans-serif;
  overflow: hidden;
}
button {
  border: 0;
  padding: 0;
  margin: 0;
  background: none;
  color: inherit;
  font: inherit;
  white-space: nowrap;
}
h1, h2, p { margin: 0; font-size: 13px; font-weight: 400; }
i { font-style: normal; }
svg { flex: none; display: block; }
.defs { position: absolute; width: 0; height: 0; }

.titlebar {
  display: flex;
  align-items: center;
  height: 28px;
  padding-left: 2px;
  background: #1c318d;
}
.logo { width: 24px; height: 26px; }
.quick { margin-left: 14px; height: 16px; }
.redo { margin-left: 6px; }
.doc { margin-left: 22px; }
.warn { width: 20px; height: 16px; margin: 0 12px 0 7px; }

.tabs {
  display: flex;
  height: 28px;
  background: #1c318d;
}
.menu { width: 31px; padding: 0 0 0 6px; }
.tab {
  position: relative;
  display: flex;
  align-items: center;
  justify-content: center;
  gap: 3px;
  margin: 2px -8px 0 0;
  padding-right: 2px;
  background: #05081c;
  clip-path: polygon(10px 0, calc(100% - 11px) 0, 100% 100%, 0 100%);
  font: 14px/20px "Noto Sans", sans-serif;
  font-variant: small-caps;
  isolation: isolate;
}
.tab::before {
  content: "";
  position: absolute;
  inset: 1px;
  z-index: -1;
  background: #2a4cdb;
  clip-path: polygon(10px 0, calc(100% - 11px) 0, 100% 100%, 0 100%);
}
.tab svg { width: 18px; height: 16px; }
.tab.active { background: #000; z-index: 1; }
.tab.active::before { display: none; }
.w-design { width: 106px; }
.w-display { width: 109px; }
.w-measure { width: 115px; }
.w-facets { width: 101px; }
.w-repair { width: 100px; }
.w-prepare { width: 112px; }
.w-physics { width: 57px; }
.tab .white { width: 18px; height: 18px; color: #fff; }

.ribbon {
  display: grid;
  grid-template-columns: 377px 115px 115px 65px 258px 203px 60px 241px;
  background: #000;
}
.group {
  display: flex;
  flex-direction: column;
  border-right: 1px solid #4a4a4a;
}
.group h2 {
  height: 21px;
  font: 14px/20px "Noto Sans", sans-serif;
  font-variant: small-caps;
  text-align: center;
  white-space: nowrap;
}
.tools { display: flex; height: 86px; }
.tools.center { justify-content: center; padding-right: 4px; }
.tools.middle { justify-content: center; }
.tools.pad { padding-left: 4px; }
.big {
  display: flex;
  flex-direction: column;
  align-items: center;
  width: 53px;
  padding-top: 8px;
}
.big svg { width: 32px; height: 32px; margin-bottom: 5px; }
.b-first { width: 61px; padding-left: 6px; }
.w46 { width: 46px; }
.w54 { width: 54px; }
.w58 { width: 58px; }
.w62 { width: 62px; }
.w70 { width: 70px; }
.w86 { width: 86px; }
.selected {
  height: 84px;
  margin-top: 2px;
  padding-top: 5px;
  background: #134b7c;
  border: 1px solid #2196f3;
}
.caret {
  width: 0;
  border: 5px solid transparent;
  border-top-color: #fff;
  border-bottom: 0;
}
.big .caret { margin-top: 11px; }
.small { display: grid; align-content: start; padding-top: 1px; }
.small button { display: flex; align-items: center; }
.ruled { position: relative; }
.ruled::before {
  content: "";
  position: absolute;
  top: 7px;
  left: 0;
  width: 1px;
  height: 74px;
  background: #444;
}
.two { grid-template-columns: 87px 100px; grid-auto-rows: 36px; width: 199px; padding-left: 10px; }
.two svg { width: 28px; height: 28px; margin-right: 4px; }
.two .caret { margin-left: 8px; }
.one { grid-auto-rows: 36px; padding-left: 8px; }
.one svg { width: 24px; height: 24px; margin-right: 10px; }
.three { grid-auto-rows: 28px; padding-left: 5px; }
.w70 + .three { padding-left: 7px; }
.three svg { width: 18px; height: 18px; margin-right: 8px; }

.view { position: relative; flex: 1; overflow: hidden; }
.scene { position: absolute; inset: 0; width: 100%; height: 100%; }
.axis-label { font: bold 11px "Noto Sans CJK SC", sans-serif; }

.tree { position: relative; width: 280px; padding-left: 3px; color: #e2e2e2; text-shadow: 1px 1px 1px #000; }
.row { display: flex; align-items: center; height: 26px; }
.c { width: 16px; height: 16px; margin-right: 4px; }
.root strong { color: #ff5a1f; margin-right: 16px; }
.rooticon { width: 18px; height: 18px; margin: 0 6px 0 -12px; }
.pop { width: 16px; height: 14px; }
.link { width: 30px; height: 26px; margin-left: -2px; }
.link path { fill: none; stroke: #999; stroke-width: 2; }
.link .tri, .tri { fill: none; stroke: #eee; stroke-width: 1; }
.link .open { fill: #1e90ff; stroke: #ddd; stroke-width: 1; }
.n { width: 18px; height: 18px; margin: 0 5px 0 3px; }
.crimson { background: #c2185b; }
.violet { background: #673ab7; }
.azure { background: #2979ff; }
.lime { background: #76ff03; }
.physics { margin-top: 12px; padding-left: 21px; }
.tri-only { width: 13px; height: 16px; }
.leaf { color: #6fa83c; }

.guide {
  position: absolute;
  left: 366px;
  top: 110px;
  display: flex;
  align-items: flex-start;
}
.pick {
  width: 32px;
  height: 32px;
  margin-top: 8px;
  background: #174f80;
  border: 1px solid #2196f3;
}
.hex { position: absolute; left: 24px; top: 1px; width: 18px; height: 16px; }
.guide-h { position: absolute; left: 33px; top: 8px; width: 205px; height: 2px; background: linear-gradient(90deg, #ddd, transparent); }
.guide-v { position: absolute; left: 32px; top: 8px; width: 2px; height: 52px; background: linear-gradient(#aaa, transparent); }
.tool { width: 34px; height: 32px; margin: 14px 3px 0 5px; }
.guide h1 {
  margin-top: 20px;
  padding: 0 2px;
  background: #2b2b2b;
  font: 14px/20px "Noto Sans", sans-serif;
  font-variant: small-caps;
  white-space: nowrap;
}
.pin { position: absolute; left: 58px; top: 48px; width: 12px; height: 12px; }

.review {
  position: absolute;
  left: 750px;
  top: 118px;
  display: grid;
  grid-template-columns: 114px 32px 2px 26px 108px;
  grid-template-rows: 26px auto;
}
.review::before {
  content: "";
  grid-column: 3;
  grid-row: 1 / 3;
  background: linear-gradient(#ddd, #999 30%, transparent 95%);
}
.review::after {
  content: "";
  grid-column: 1 / 4;
  grid-row: 1;
  height: 2px;
  background: linear-gradient(90deg, transparent, #ddd);
}
.pairs { grid-column: 1 / 3; grid-row: 1; line-height: 26px; white-space: nowrap; }
.opts { grid-column: 4; grid-row: 1; background: #3f80b8; border: 1px solid #2196f3; }
.close { grid-column: 5; grid-row: 1; justify-self: start; padding: 0 5px; }
.close svg { width: 16px; height: 16px; }
.side { grid-column: 2; grid-row: 2; align-self: start; background: #5c5c5b; }
.side svg { width: 32px; height: 32px; }
.panel {
  grid-column: 4 / 6;
  grid-row: 2;
  display: flex;
  flex-direction: column;
  background: #000;
}
.panel h2 { padding-left: 8px; line-height: 24px; font-weight: 500; color: #ff9800; }
.panel button {
  position: relative;
  display: flex;
  align-items: center;
  height: 24px;
  padding-left: 8px;
}
.panel button::before {
  content: "";
  position: absolute;
  left: 3px;
  top: 1px;
  bottom: 1px;
  width: 1px;
  background: #fff;
}
.panel .sub { margin-left: 10px; }
.panel .tall { height: 30px; }
.panel .on { color: #2196f3; font-weight: 500; }
.panel .on::before { left: 0; top: 0; bottom: 0; width: 4px; background: #2196f3; }
.chip { width: 16px; height: 16px; margin: 0 22px 0 auto; }
.line { width: 69px; height: 2px; margin: 0 7px 0 auto; }
.line.free { margin-right: 17px; }
.shared { background: #84ff00; }
.teal { background: #009688; }
.yellow { background: #ffeb3b; }
.magenta { background: #d500d5; }
.red { background: #f00; }
.mint { background: #1de9b6; }
```
